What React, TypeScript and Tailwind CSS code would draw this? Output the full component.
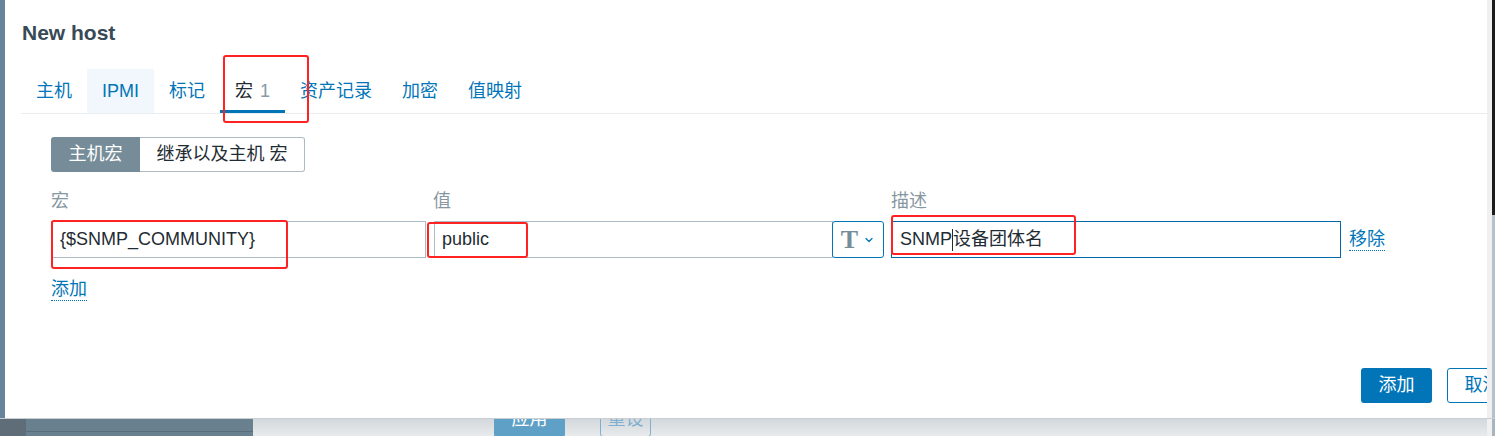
import React from "react";
import { ChevronDown } from "lucide-react";

const font = { fontFamily: '"Liberation Sans", "Noto Sans CJK SC", Arial, sans-serif' };

function Tab({ label, active, hover, count }: { label: string; active?: boolean; hover?: boolean; count?: string }) {
  return (
    <div
      className={
        "h-[44px] px-[15px] flex items-center text-[18px] " +
        (active ? "border-b-[3px] border-[#0275b8] text-[#1f2c33] pt-[3px]" : "text-[#0275b8]") +
        (hover ? " bg-[#f1f7fc]" : "")
      }
    >
      <span>{label}</span>
      {count && <span className="ml-[7px] text-[#8a9aa5]">{count}</span>}
    </div>
  );
}

export default function App() {
  return (
    <div className="w-[1495px] h-[436px] overflow-hidden relative flex flex-col bg-[#d8dde0]" style={font}>
      {/* top area: dialog */}
      <div className="h-[418px] flex">
        <div className="w-[5px] bg-[#66849a]" />
        <div className="flex-1 bg-white overflow-hidden relative">
          <div className="w-[1534px] h-full flex flex-col pl-[16px] pr-[21px]">
            <div className="pt-[21px] leading-[24px] text-[21px] font-bold text-[#384a56] pl-px">New host</div>
            <div className="mt-[24px] flex border-b border-[#e9edf0]">
              <Tab label="主机" />
              <Tab label="IPMI" hover />
              <Tab label="标记" />
              <Tab label="宏" active count="1" />
              <Tab label="资产记录" />
              <Tab label="加密" />
              <Tab label="值映射" />
            </div>
            <div className="pl-[30px] flex flex-col">
              <div className="mt-[23px] flex h-[35px] text-[18px]">
                <div className="w-[89px] bg-[#768d99] text-white rounded-l-[3px] flex items-center justify-center">主机宏</div>
                <div className="w-[165px] border border-l-0 border-[#acbbc4] text-[#1f2c33] rounded-r-[3px] flex items-center justify-center">
                  继承以及主机 宏
                </div>
              </div>
              <div className="mt-[17px] flex text-[18px] leading-[24px] text-[#8797a2]">
                <div className="w-[382px]">宏</div>
                <div className="w-[458px]">值</div>
                <div>描述</div>
              </div>
              <div className="mt-[8px] flex items-center text-[18px] text-[#1f2c33]">
                <div className="w-[375px] h-[37px] border border-[#acbbc4] flex items-center pl-[8px]">{"{$SNMP_COMMUNITY}"}</div>
                <div className="ml-[8px] w-[399px] h-[37px] border border-[#acbbc4] flex items-center pl-[7px]">public</div>
                <div className="-ml-px w-[52px] h-[37px] border border-[#0275b8] rounded-[3px] flex items-center justify-center gap-[5px]">
                  <span className="text-[26px] font-bold text-[#768d99] leading-none" style={{ fontFamily: '"Liberation Serif", serif' }}>T</span>
                  <ChevronDown size={12} strokeWidth={2.5} color="#0275b8" />
                </div>
                <div className="ml-[7px] w-[450px] h-[37px] border border-[#0068a8] flex items-center pl-[8px]">
                  <span>SNMP</span>
                  <span className="w-px h-[22px] bg-[#1f2c33]" />
                  <span>设备团体名</span>
                </div>
                <span className="ml-[8px] text-[#0275b8] leading-[22px] border-b border-dotted border-[#0275b8]">移除</span>
              </div>
              <div className="mt-[20px] flex">
                <span className="text-[18px] text-[#0275b8] leading-[22px] border-b border-dotted border-[#0275b8]">添加</span>
              </div>
            </div>
            <div className="mt-auto pb-[15px] flex justify-end gap-[15px] text-[18px]">
              <div className="w-[71px] h-[35px] bg-[#0275b8] text-white rounded-[3px] flex items-center justify-center">添加</div>
              <div className="w-[71px] h-[35px] border border-[#0275b8] text-[#0275b8] rounded-[3px] flex items-center justify-center">取消</div>
            </div>
          </div>
        </div>
        <div className="w-[5px] bg-[#f0f0f0]" />
        <div className="w-[3px] flex flex-col">
          <div className="h-[215px] bg-[#1c1c1c]" />
          <div className="flex-1 bg-[#b7c0c8]" />
        </div>
      </div>
      {/* bottom backdrop */}
      <div className="flex-1 flex overflow-hidden border-t border-[#c9ced2]">
        <div className="w-[26px] bg-[#5e6d77]" />
        <div className="w-[227px] bg-[#69808e] flex flex-col">
          <div className="h-[12px]" />
          <div className="h-px bg-[#5a6e7a]" />
        </div>
        <div className="flex-1 bg-gradient-to-b from-[#d3d8dc] to-[#e8ebed] flex text-[18px] text-white">
          <div className="ml-[241px] -mt-[18px] w-[71px] h-[36px] bg-[#5fa1c6] rounded-[3px] flex items-center justify-center">应用</div>
          <div className="ml-[35px] -mt-[18px] w-[51px] h-[36px] border border-[#7fb0cf] rounded-[3px] text-[#7fb0cf] flex items-center justify-center">重设</div>
        </div>
        <div className="w-[5px] bg-[#f0f0f0]" />
        <div className="w-[3px] bg-[#aab4bd]" />
      </div>

      {/* red annotation boxes */}
      <div className="absolute left-[223px] top-[55px] w-[86px] h-[68px] border-2 border-[#f22] rounded-[3px]" />
      <div className="absolute left-[51px] top-[220px] w-[237px] h-[49px] border-2 border-[#f22] rounded-[3px]" />
      <div className="absolute left-[427px] top-[222px] w-[101px] h-[36px] border-2 border-[#f22] rounded-[3px]" />
      <div className="absolute left-[891px] top-[215px] w-[185px] h-[40px] border-2 border-[#f22] rounded-[3px]" />
    </div>
  );
}
